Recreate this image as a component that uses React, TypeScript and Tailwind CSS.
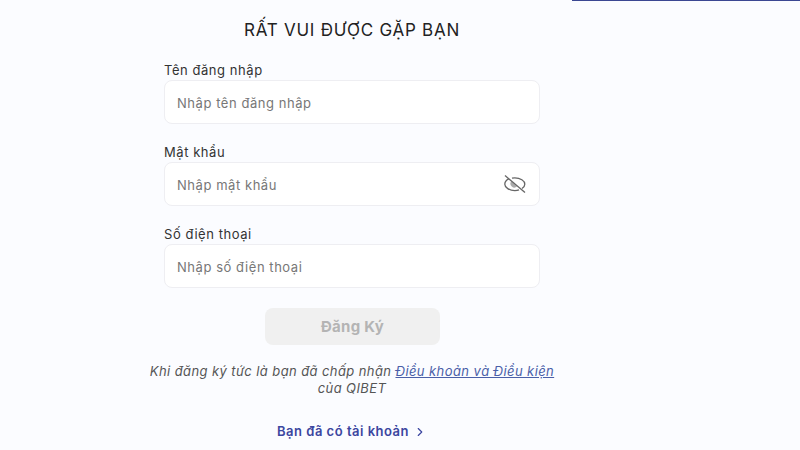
import { ChevronRight } from 'lucide-react'

const FIELDS = [
  { label: 'Tên đăng nhập', placeholder: 'Nhập tên đăng nhập', eye: false },
  { label: 'Mật khẩu', placeholder: 'Nhập mật khẩu', eye: true },
  { label: 'Số điện thoại', placeholder: 'Nhập số điện thoại', eye: false },
]

function EyeSlash() {
  return (
    <svg viewBox="0 0 22 18" className="ml-auto w-[22px] h-[18px] text-[#666]" fill="none" stroke="currentColor" strokeWidth={1.3}>
      <path d="M5 3.6C2.5 4.8 0.8 7 0.8 9.2c0 3.2 4.5 6.4 10 6.4 1.5 0 3-.2 4.2-.7M8 3.1c.9-.2 1.8-.3 2.8-.3 5.5 0 10 3.2 10 6.4 0 1.6-1 3.1-2.8 4.3" />
      <path d="M1 .6 21 17.4" />
      <path d="M7.2 6.2a4 4 0 0 0 5.8 5.4z" fill="currentColor" fillOpacity={0.55} stroke="none" />
    </svg>
  )
}

export default function App() {
  return (
    <div className="w-[800px] h-[450px] overflow-hidden bg-[#fbfcff] font-['Inter',sans-serif]">
      <div className="flex justify-end">
        <div className="w-[228px] h-px bg-[#3b4792]" />
      </div>
      <div className="w-[376px] ml-[164px] flex flex-col">
        <h1 className="mt-[19px] h-[20px] leading-[20px] text-center text-[17px] font-normal tracking-[0.75px] text-[#222]">RẤT VUI ĐƯỢC GẶP BẠN</h1>
        <div className="mt-[20px] flex flex-col gap-[18px]">
          {FIELDS.map(({ label, placeholder, eye }) => (
            <div key={label} className="flex flex-col">
              <div className="h-[20px] leading-[21px] text-[13px] font-normal tracking-[0.55px] text-[#333]">{label}</div>
              <div className="h-[44px] bg-white border border-[#eeeef2] rounded-lg flex items-center pl-3 pr-[13px]">
                <span className="text-[13px] tracking-[0.55px] pt-[3px] text-[#777]">{placeholder}</span>
                {eye && <EyeSlash />}
              </div>
            </div>
          ))}
        </div>
        <button className="mt-5 self-center ml-px w-[175px] h-[37px] rounded-lg bg-[#f0f0f0] pt-px text-[15px] tracking-[0.3px] font-bold text-[#b4b4b4]">Đăng Ký</button>
        <p className="mt-[18px] mx-[-20px] text-center text-[13px] leading-[17px] tracking-[0.4px] italic text-[#555]">
          Khi đăng ký tức là bạn đã chấp nhận <span className="text-[#4a5fa8] underline">Điều khoản và Điều kiện</span>
          <br />
          của QIBET
        </p>
        <div className="mt-[25px] flex items-center justify-center gap-1 text-[13px] tracking-[0.5px] font-semibold text-[#3b46a0]">
          Bạn đã có tài khoản
          <ChevronRight className="w-[14px] h-[14px]" strokeWidth={2} />
        </div>
      </div>
    </div>
  )
}
